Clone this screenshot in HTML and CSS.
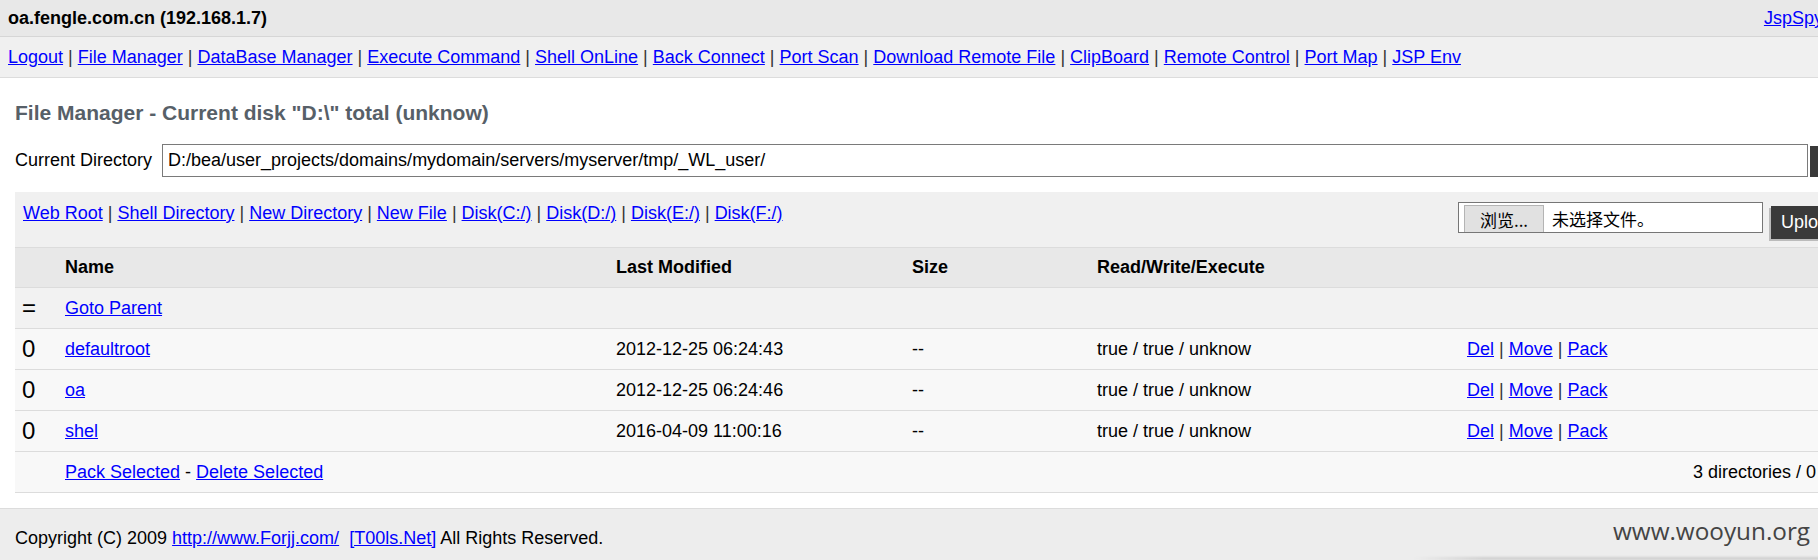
FILE: index.html
```html
<!DOCTYPE html>
<html lang="en">
<head>
<meta charset="utf-8">
<title>JspSpy</title>
<link rel="stylesheet" href="styles.css">
</head>
<body>
<div class="page">
  <div class="topbar">
    <span class="host">oa.fengle.com.cn (192.168.1.7)</span>
    <a class="ver" href="#">JspSpy Ver: 2009</a>
  </div>
  <div class="nav">
    <a href="#">Logout</a><span class="sep">|</span><a href="#">File Manager</a><span class="sep">|</span><a href="#">DataBase Manager</a><span class="sep">|</span><a href="#">Execute Command</a><span class="sep">|</span><a href="#">Shell OnLine</a><span class="sep">|</span><a href="#">Back Connect</a><span class="sep">|</span><a href="#">Port Scan</a><span class="sep">|</span><a href="#">Download Remote File</a><span class="sep">|</span><a href="#">ClipBoard</a><span class="sep">|</span><a href="#">Remote Control</a><span class="sep">|</span><a href="#">Port Map</a><span class="sep">|</span><a href="#">JSP Env</a>
  </div>
  <div class="main">
    <h2 class="heading">File Manager - Current disk "D:\" total (unknow)</h2>
    <div class="dirrow">
      <span class="dirlabel">Current Directory</span>
      <span class="dirinput">D:/bea/user_projects/domains/mydomain/servers/myserver/tmp/_WL_user/</span>
      <span class="btn gobtn">GO</span>
    </div>
    <table class="files">
      <colgroup>
        <col class="c-chk"><col class="c-name"><col class="c-date"><col class="c-size"><col class="c-rwe"><col class="c-act">
      </colgroup>
      <tr class="toolbar">
        <td colspan="6">
          <div class="toolbar-in">
            <div class="tlinks">
              <a href="#">Web Root</a><span class="sep">|</span><a href="#">Shell Directory</a><span class="sep">|</span><a href="#">New Directory</a><span class="sep">|</span><a href="#">New File</a><span class="sep">|</span><a href="#">Disk(C:/)</a><span class="sep">|</span><a href="#">Disk(D:/)</a><span class="sep">|</span><a href="#">Disk(E:/)</a><span class="sep">|</span><a href="#">Disk(F:/)</a>
            </div>
            <div class="upload">
              <span class="filebox"><span class="browse">浏览...</span><span class="nofile">未选择文件。</span></span>
              <span class="btn upbtn">Upload</span>
            </div>
          </div>
        </td>
      </tr>
      <tr class="head">
        <th></th><th>Name</th><th>Last Modified</th><th>Size</th><th>Read/Write/Execute</th><th></th>
      </tr>
      <tr class="parent">
        <td class="chk">=</td><td><a href="#">Goto Parent</a></td><td></td><td></td><td></td><td></td>
      </tr>
      <tr class="row">
        <td class="chk">0</td><td><a href="#">defaultroot</a></td><td>2012-12-25 06:24:43</td><td>--</td><td>true / true / unknow</td>
        <td><a href="#">Del</a><span class="sep">|</span><a href="#">Move</a><span class="sep">|</span><a href="#">Pack</a></td>
      </tr>
      <tr class="row">
        <td class="chk">0</td><td><a href="#">oa</a></td><td>2012-12-25 06:24:46</td><td>--</td><td>true / true / unknow</td>
        <td><a href="#">Del</a><span class="sep">|</span><a href="#">Move</a><span class="sep">|</span><a href="#">Pack</a></td>
      </tr>
      <tr class="row">
        <td class="chk">0</td><td><a href="#">shel</a></td><td>2016-04-09 11:00:16</td><td>--</td><td>true / true / unknow</td>
        <td><a href="#">Del</a><span class="sep">|</span><a href="#">Move</a><span class="sep">|</span><a href="#">Pack</a></td>
      </tr>
      <tr class="row lastrow">
        <td></td>
        <td colspan="3"><a href="#">Pack Selected</a> - <a href="#">Delete Selected</a></td>
        <td colspan="2" class="count">3 directories / 0 files</td>
      </tr>
    </table>
  </div>
  <div class="footer">
    Copyright (C) 2009 <a href="#">http://www.Forjj.com/</a>&nbsp; <a href="#">[T00ls.Net]</a> All Rights Reserved.
    <span class="watermark">www.wooyun.org</span>
    <span class="shadow"></span>
  </div>
</div>
</body>
</html>
```
FILE: styles.css
```css
html, body {
  margin: 0;
  padding: 0;
  background: #fff;
}
body {
  font-family: "Liberation Sans", Arial, sans-serif;
  font-size: 18px;
  color: #000;
  overflow: hidden;
}
a {
  color: #0000ff;
  text-decoration: underline;
}
.sep {
  color: #333;
  margin: 0 5px;
}
.page {
  width: 1883px;
  position: relative;
}
.topbar {
  height: 36px;
  background: #e8e8e8;
  border-bottom: 1px solid #d6d6d6;
  display: flex;
  align-items: center;
  justify-content: space-between;
  padding: 0 8px;
}
.host {
  font-weight: bold;
}
.ver {
  margin-right: -30px;
}
.nav {
  height: 40px;
  background: #f0f0f0;
  border-bottom: 1px solid #dcdcdc;
  display: flex;
  align-items: center;
  padding-left: 8px;
  white-space: nowrap;
}
.main {
  padding: 0 15px;
}
.heading {
  margin: 23px 0 19px;
  font-size: 21px;
  line-height: 24px;
  color: #576068;
}
.dirrow {
  display: flex;
  align-items: center;
  height: 33px;
}
.dirlabel {
  width: 147px;
}
.dirinput {
  box-sizing: border-box;
  width: 1646px;
  height: 33px;
  border: 1px solid #7a7a7a;
  padding: 0 5px;
  display: flex;
  align-items: center;
  background: #fff;
}
.btn {
  background: #3a3a3a;
  color: #fff;
  display: flex;
  align-items: center;
  justify-content: center;
  box-sizing: border-box;
}
.gobtn {
  margin-left: 2px;
  width: 58px;
  height: 31px;
  align-self: flex-end;
}
.files {
  margin-top: 15px;
  width: 1853px;
  border-collapse: collapse;
  table-layout: fixed;
}
.c-chk { width: 50px; }
.c-name { width: 551px; }
.c-date { width: 296px; }
.c-size { width: 185px; }
.c-rwe { width: 370px; }
.c-act { width: 401px; }
.files td, .files th {
  padding: 0;
  text-align: left;
  white-space: nowrap;
}
.toolbar td {
  background: #f0f0f0;
  height: 55px;
  vertical-align: top;
}
.toolbar-in {
  display: flex;
  align-items: flex-start;
  padding: 10px 0 0 8px;
}
.tlinks {
  line-height: 22px;
}
.upload {
  margin-left: auto;
  display: flex;
  align-items: flex-start;
  margin-right: 20px;
}
.filebox {
  box-sizing: border-box;
  width: 305px;
  height: 31px;
  border: 1px solid #767676;
  background: #fff;
  display: flex;
  align-items: flex-end;
  font-family: "Noto Sans CJK SC", "Liberation Sans", sans-serif;
  font-size: 17px;
  overflow: hidden;
}
.browse {
  box-sizing: border-box;
  margin-left: 5px;
  width: 80px;
  height: 27px;
  background: #e1e1e1;
  border: 1px solid #b4b4b4;
  border-bottom: none;
  display: flex;
  align-items: center;
  justify-content: center;
  line-height: 1;
}
.nofile {
  margin-left: 8px;
  height: 27px;
  display: flex;
  align-items: center;
  line-height: 1;
}
.upbtn {
  margin-left: 8px;
  margin-top: 4px;
  width: 77px;
  height: 33px;
  box-shadow: -2px 2px 0 #bbb;
}
.files tr.head, .files tr.parent, .files tr.row {
  border-top: 1px solid #dcdcdc;
}
.head th {
  height: 39px;
  background: #e8e8e8;
  font-weight: bold;
}
.parent td {
  height: 40px;
  background: #f2f2f2;
}
.row td {
  height: 40px;
  background: #f8f8f8;
}
.lastrow {
  border-bottom: 1px solid #dcdcdc;
}
.chk {
  font-size: 24px;
  padding-left: 7px !important;
}
.count {
  text-align: right !important;
  padding-right: 15px !important;
}
.footer {
  margin-top: 15px;
  border-top: 1px solid #dcdcdc;
  background: #ededed;
  height: 60px;
  box-sizing: border-box;
  padding: 18px 15px 0;
  line-height: 22px;
  position: relative;
}
.watermark {
  position: absolute;
  left: 1613px;
  top: 7px;
  font-family: "Open Sans", "DejaVu Sans", sans-serif;
  font-size: 24.3px;
  color: #444;
  line-height: 30px;
}
.shadow {
  position: absolute;
  left: 1413px;
  top: 48px;
  width: 470px;
  height: 3px;
  background: linear-gradient(to right, rgba(0,0,0,0), rgba(0,0,0,0.12) 15%, rgba(0,0,0,0.12));
  filter: blur(1px);
}
```
